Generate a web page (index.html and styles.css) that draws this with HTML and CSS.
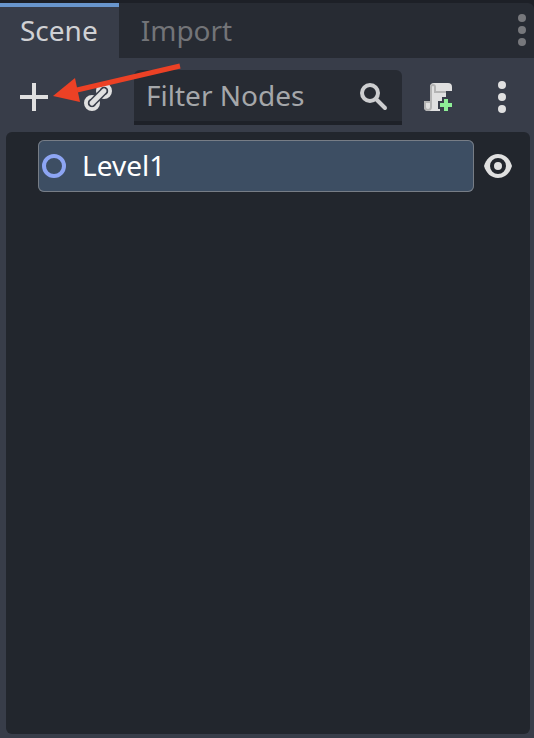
FILE: index.html
```html
<!DOCTYPE html>
<html lang="en">
<head>
<meta charset="utf-8">
<title>Scene</title>
<link rel="stylesheet" href="styles.css">
</head>
<body>
<main class="dock">
  <header class="tabbar">
    <div class="tabs" role="tablist">
      <button class="tab tab-active" role="tab" aria-selected="true">Scene</button>
      <button class="tab" role="tab" aria-selected="false">Import</button>
    </div>
    <button class="dock-menu" aria-label="Dock options">
      <svg class="dots" viewBox="0 0 8 32"><circle cx="4" cy="4" r="4"/><circle cx="4" cy="16" r="4"/><circle cx="4" cy="28" r="4"/></svg>
    </button>
  </header>
  <div class="panel">
    <div class="toolbar">
      <button class="tool" aria-label="Add node">
        <svg class="icon" viewBox="0 0 32 32"><path d="M14 2h4v12h12v4H18v12h-4V18H2v-4h12z" fill="#e0e0e0"/></svg>
      </button>
      <button class="tool" aria-label="Instantiate scene">
        <svg class="icon" viewBox="0 0 32 32" fill="none" stroke-linecap="round">
          <circle cx="10" cy="22" r="6" stroke="#e0e0e0" stroke-width="4"/>
          <circle cx="22" cy="10" r="6" stroke="#e0e0e0" stroke-width="4"/>
          <path d="M10 22 22 10" stroke="#383d49" stroke-width="8"/>
          <path d="M10 22 22 10" stroke="#e0e0e0" stroke-width="5"/>
        </svg>
      </button>
      <label class="filter">
        <input class="filter-input" type="text" placeholder="Filter Nodes" aria-label="Filter Nodes">
        <svg class="icon" viewBox="0 0 32 32" fill="none" stroke="#cdced0" stroke-width="4"><circle cx="12" cy="14" r="8"/><path d="M18 20l9 9" stroke-linecap="round"/></svg>
      </label>
      <button class="tool" aria-label="Attach script">
        <svg class="icon" viewBox="0 0 32 32">
          <path d="M12 2h14a4 4 0 0 1 4 4v4h-6v6h-4v4h-4v8h2v2H6a4 4 0 0 1-4-4v-6h6V6a4 4 0 0 1 4-4z" fill="#e0e0e0"/>
          <path d="M24 11H13V6a2 2 0 0 0-4 0v20a3 3 0 0 1-6 0v-5h5" fill="none" stroke="#b4b4b4" stroke-width="2"/>
          <path d="M22 18h4v4h4v4h-4v4h-4v-4h-4v-4h4z" fill="#383d49" stroke="#383d49" stroke-width="4"/>
          <path d="M16 28h2v2h-2z" fill="#e0e0e0"/>
          <path d="M22 18h4v4h4v4h-4v4h-4v-4h-4v-4h4z" fill="#8eef97"/>
        </svg>
      </button>
      <button class="tool" aria-label="More options">
        <svg class="dots dots-bright" viewBox="0 0 8 32"><circle cx="4" cy="4" r="4"/><circle cx="4" cy="16" r="4"/><circle cx="4" cy="28" r="4"/></svg>
      </button>
    </div>
    <section class="tree" role="tree" aria-label="Scene tree">
      <div class="row">
        <div class="node" role="treeitem" aria-selected="true">
          <svg class="icon" viewBox="0 0 32 32"><circle cx="16" cy="16" r="10" fill="none" stroke="#8da5f3" stroke-width="4"/></svg>
          <span class="node-name">Level1</span>
        </div>
        <button class="visibility" aria-label="Toggle visibility">
          <svg class="icon" viewBox="0 0 32 32"><path d="M16 4C9 4 4 9 2 16c2 7 7 12 14 12s12-5 14-12C28 9 23 4 16 4z" fill="#e0e0e0"/><circle cx="16" cy="16" r="6" fill="none" stroke="#22262d" stroke-width="4"/></svg>
        </button>
      </div>
    </section>
  </div>
  <svg class="pointer" viewBox="0 0 130 40" aria-hidden="true"><path d="M24 27 127 3" stroke="#ec4125" stroke-width="5"/><path d="M0 33 22 15 27 39z" fill="#ec4125"/></svg>
</main>
</body>
</html>
```

FILE: styles.css
```css
* {
  box-sizing: border-box;
}

body {
  margin: 0;
  background: #1d2027;
  color: #fff;
  font: 28px/38px "Noto Sans", sans-serif;
}

button {
  display: flex;
  align-items: center;
  justify-content: center;
  padding: 0;
  border: 0;
  background: none;
  color: inherit;
  font: inherit;
}

.dock {
  position: relative;
  display: flex;
  flex-direction: column;
  min-height: 100vh;
  padding-top: 3px;
}

.tabbar {
  display: flex;
  justify-content: space-between;
  background: #272b33;
  border-top-right-radius: 6px;
}

.tabs {
  display: flex;
}

.tab {
  height: 55px;
  padding: 0 22px 2px;
  color: #737478;
}

.tab-active {
  padding: 0 21px 6px 20px;
  border-top: 4px solid #6996cd;
  background: #383d49;
  color: #d0d1d4;
}

.dock-menu {
  padding: 0 8px 2px;
}

.dots {
  width: 8px;
  height: 32px;
  fill: #77787c;
}

.dots-bright {
  fill: #e0e0e0;
}

.icon {
  flex: none;
  width: 32px;
  height: 32px;
}

.panel {
  display: flex;
  flex: 1;
  flex-direction: column;
  gap: 7px;
  padding: 12px 4px 4px 6px;
  background: #383d49;
}

.toolbar {
  display: flex;
  align-items: flex-start;
  gap: 8px;
}

.tool {
  flex: none;
  width: 56px;
  height: 54px;
}

.filter {
  display: flex;
  flex: 1;
  align-items: center;
  min-width: 0;
  height: 55px;
  padding: 0 12px 2px;
  border-bottom: 4px solid #1e2128;
  border-radius: 6px 6px 0 0;
  background: #272b33;
}

.filter-input {
  flex: 1;
  min-width: 0;
  padding: 0;
  border: 0;
  outline: 0;
  background: none;
  color: #e0e0e0;
  font: inherit;
}

.filter-input::placeholder {
  color: #a5a7aa;
  opacity: 1;
}

.tree {
  flex: 1;
  padding: 8px 12px 8px 32px;
  background: #22262d;
  border-radius: 6px;
}

.row {
  display: flex;
  gap: 4px;
}

.node {
  display: flex;
  flex: 1;
  align-items: center;
  gap: 12px;
  height: 52px;
  border-radius: 6px;
  background: #3d4e63;
  box-shadow: inset 0 0 0 1px #777d86;
}

.node-name {
  padding-bottom: 2px;
}

.visibility {
  width: 40px;
}

.pointer {
  position: absolute;
  top: 63px;
  left: 53px;
  width: 130px;
  height: 40px;
  pointer-events: none;
}
```
